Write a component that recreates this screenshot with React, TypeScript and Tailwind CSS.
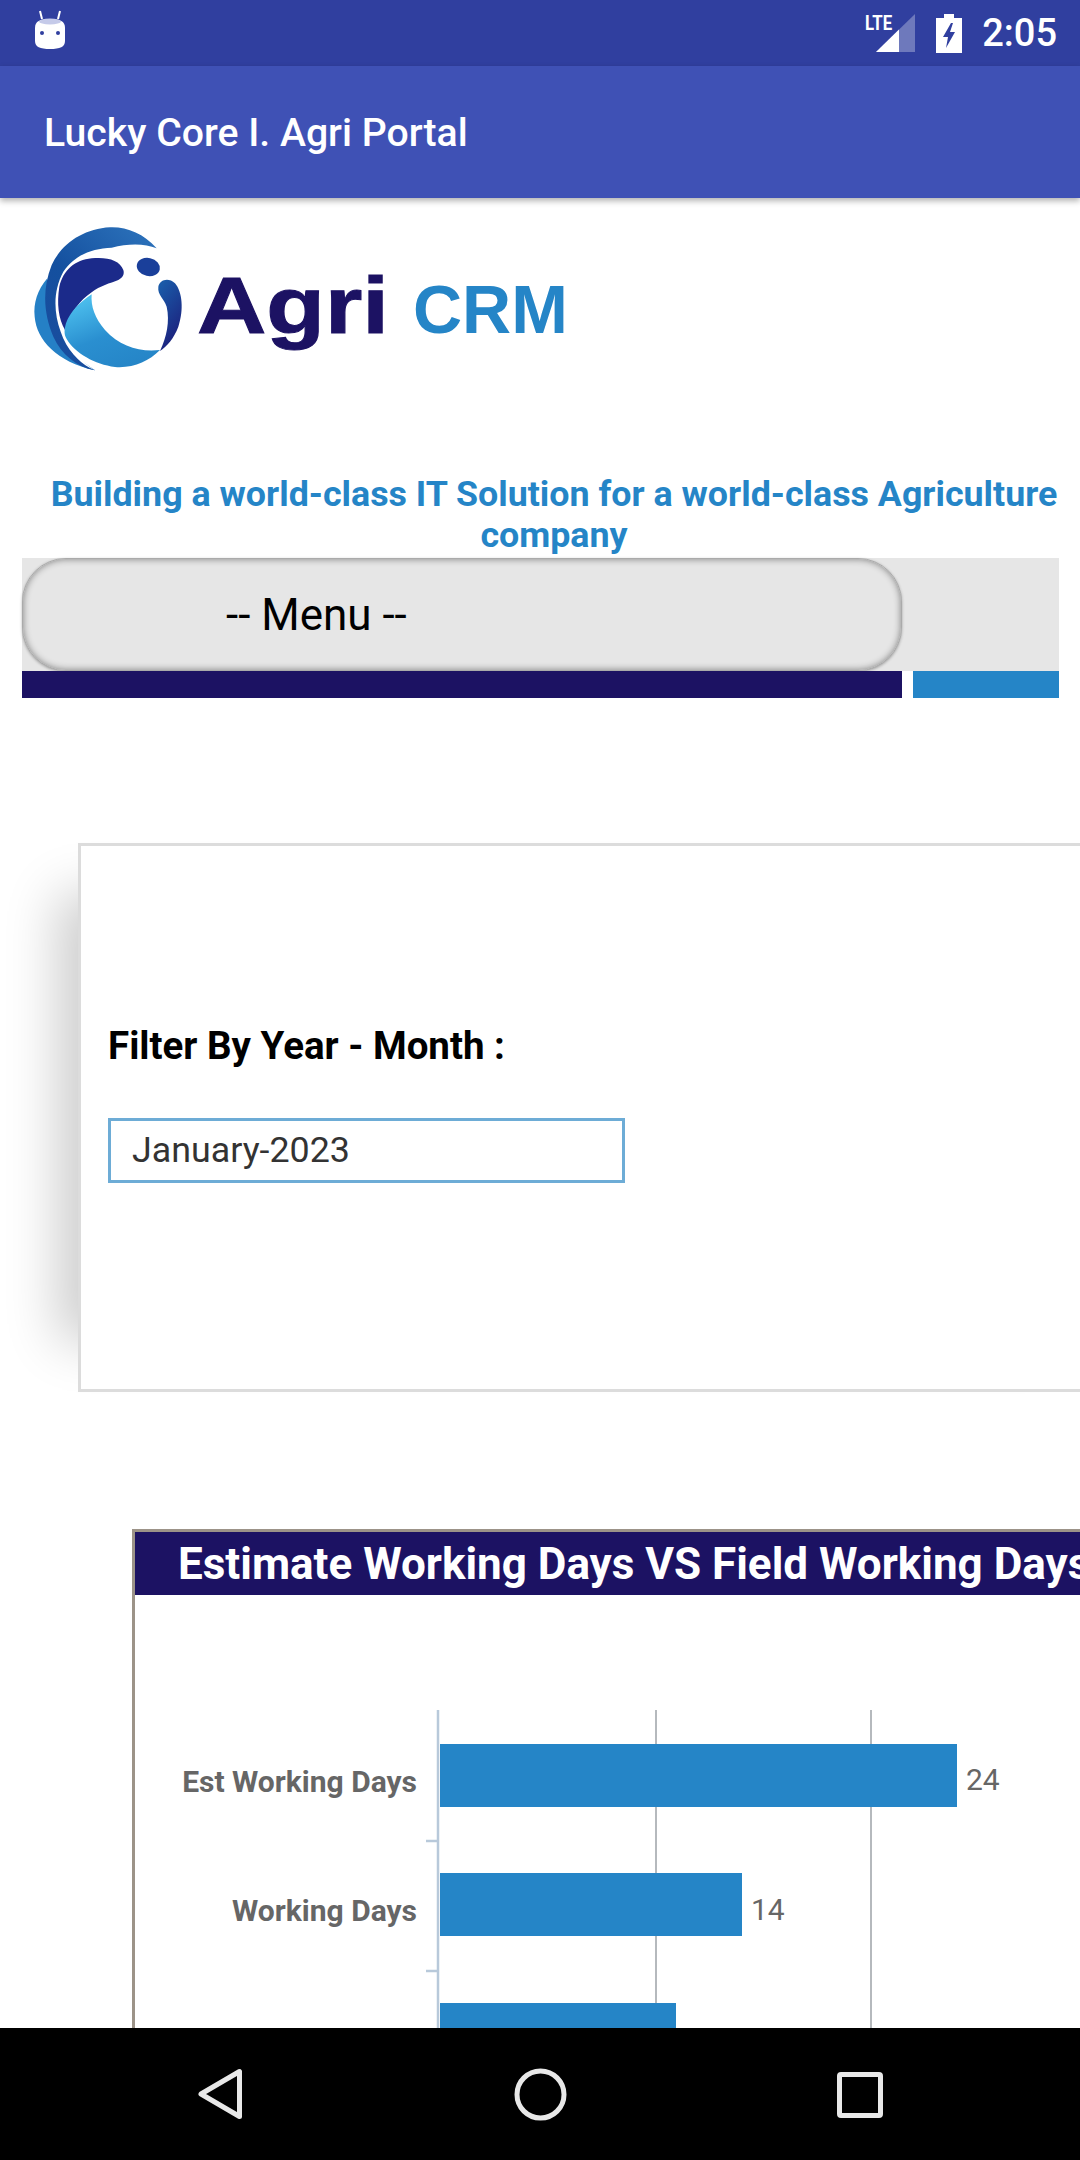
import React from "react";

const roboto = "font-['Roboto',sans-serif]";

function Logo() {
  return (
    <svg width="180" height="160" viewBox="0 0 540 480" className="shrink-0">
      <defs>
        <linearGradient id="lc" x1="0.2" y1="0" x2="0.7" y2="1">
          <stop offset="0" stopColor="#4fc3f0" />
          <stop offset="0.55" stopColor="#2a8fd0" />
          <stop offset="1" stopColor="#2585c7" />
        </linearGradient>
        <linearGradient id="top" x1="0.8" y1="0" x2="0.1" y2="1">
          <stop offset="0" stopColor="#2a6fb8" />
          <stop offset="0.5" stopColor="#14509f" />
          <stop offset="1" stopColor="#1a4c9e" />
        </linearGradient>
        <linearGradient id="arc" x1="0.3" y1="0" x2="0.7" y2="1">
          <stop offset="0" stopColor="#1a5aa8" />
          <stop offset="1" stopColor="#1c1a78" />
        </linearGradient>
      </defs>
      <path d="M82 190C52 225 40 265 44 305C50 375 110 440 225 466L130 400C95 340 75 270 82 190Z" fill="#2580c6" />
      <path d="M410 100C370 55 320 35 270 37C190 42 125 85 95 150C65 225 72 300 100 365C125 420 170 455 225 466C175 440 140 405 122 350C100 290 100 225 130 170C165 120 215 100 275 98C325 85 375 85 410 100Z" fill="url(#top)" />
      <path d="M310 165C300 135 260 125 215 130C165 135 130 165 118 215C110 265 115 310 135 345C150 295 180 255 215 232C240 212 270 205 295 195C308 188 314 178 310 165Z" fill="#1b2a8a" />
      <path d="M215 238C180 262 150 290 138 325C132 345 132 360 140 372C165 415 225 448 285 456C340 460 385 440 420 405C360 412 300 395 255 345C225 310 212 275 215 238Z" fill="url(#lc)" />
      <path d="M140 375C150 415 185 450 225 466C190 445 160 410 140 375Z" fill="#ffffff" />
      <ellipse cx="385" cy="156" rx="35" ry="27" fill="#1a3f9a" transform="rotate(12 385 156)" />
      <path d="M415 215C418 195 445 185 465 205C487 230 492 285 475 335C462 370 440 395 420 408C440 365 450 320 440 275C432 250 412 240 415 215Z" fill="url(#arc)" />
    </svg>
  );
}

function CatIcon() {
  return (
    <svg width="40" height="44" viewBox="0 0 40 44" className="-mt-[6px]">
      <path d="M10 3l2 8M30 3l-2 8" stroke="#ffffff" strokeWidth="2" />
      <path d="M5 20C5 13 10 11 20 11S35 13 35 20V33C35 39 30 41 20 41S5 39 5 33Z" fill="#ffffff" />
      <ellipse cx="20" cy="13.5" rx="11" ry="3" fill="#c5cae9" />
      <circle cx="12" cy="25" r="2" fill="#303f9f" />
      <circle cx="28" cy="25" r="2" fill="#303f9f" />
    </svg>
  );
}

function StatusRight() {
  return (
    <div className="flex items-center">
      <div className="relative w-[50px] h-[40px]">
        <svg width="40" height="39" viewBox="0 0 40 39" className="absolute right-0 top-0">
          <path d="M1 39L40 1V39Z" fill="#ffffff" fillOpacity="0.3" />
          <path d="M1 39L24 16.5V39Z" fill="#ffffff" />
        </svg>
        <span className={`absolute left-0 top-[0px] text-[21px] leading-[20px] font-bold text-white ${roboto} scale-x-[0.8] origin-left`}>
          LTE
        </span>
      </div>
      <svg width="26" height="39" viewBox="0 0 26 39" className="ml-[21px]">
        <path
          fillRule="evenodd"
          d="M8 0H18V4H26V39H0V4H8ZM15 9L7 23H12L10 34L19 18H14L17 9Z"
          fill="#ffffff"
        />
      </svg>
      <span className={`ml-[20px] text-[38px] leading-[40px] text-white font-medium ${roboto}`}>2:05</span>
    </div>
  );
}

function Chart() {
  const grid = "#b5b9bd";
  const axis = "#b8c9da";
  const font = { fontFamily: "Roboto, sans-serif" };
  return (
    <svg width="945" height="445" viewBox="135 1595 945 445" className="block">
      <path d={`M656 1710V2040M871 1710V2040`} stroke={grid} strokeWidth="2" fill="none" />
      <path d={`M438 1710V2040M426 1841H438M426 1971H438`} stroke={axis} strokeWidth="2.5" fill="none" />
      <rect x="440" y="1744" width="517" height="63" fill="#2585c7" />
      <rect x="440" y="1873" width="302" height="63" fill="#2585c7" />
      <rect x="440" y="2003" width="236" height="63" fill="#2585c7" />
      <g style={font} fill="#666666" fontSize="30" fontWeight="700" textAnchor="end">
        <text x="417" y="1792">Est Working Days</text>
        <text x="417" y="1921">Working Days</text>
      </g>
      <g style={font} fill="#666666" fontSize="30">
        <text x="966" y="1790">24</text>
        <text x="751" y="1920">14</text>
      </g>
    </svg>
  );
}

export default function App() {
  return (
    <div className={`w-[1080px] h-[2160px] flex flex-col overflow-hidden bg-white ${roboto}`}>
      <div className="h-[66px] shrink-0 bg-[#303f9f] flex items-center justify-between pl-[30px] pr-[23px]">
        <CatIcon />
        <StatusRight />
      </div>
      <div className="h-[132px] shrink-0 bg-[#3f51b5] flex items-center pl-[44px] pt-[2px] relative z-10 shadow-[0_3px_6px_rgba(0,0,0,0.3)]">
        <span className="text-[39.2px] font-medium text-white">Lucky Core I. Agri Portal</span>
      </div>

      <main className="flex-1 overflow-hidden">
        <div className="flex items-start pl-[20px] pt-[17px] h-[276px]">
          <Logo />
          <div className="flex items-baseline -ml-[3px] mt-[45px] font-['Liberation_Sans',sans-serif] font-bold">
            <span className="inline-block origin-left scale-x-[1.2] [-webkit-text-stroke:1px_#1c1263] text-[80px] leading-[92px] text-[#1c1263]">Agri</span>
            <span className="text-[68px] leading-[92px] text-[#2585c7] ml-[56px]">CRM</span>
          </div>
        </div>

        <p className="w-[1064px] ml-[22px] text-center text-[35.8px] leading-[41px] font-bold text-[#2585c7]">
          Building a world-class IT Solution for a world-class Agriculture company
        </p>

        <div className="ml-[22px] w-[1037px] h-[113px] mt-[2px] bg-[#e6e6e6]">
          <div className={`w-[880px] h-[113px] rounded-[44px] bg-[#e6e6e6] border border-[#aaaaaa] shadow-[inset_0_0_7px_rgba(0,0,0,0.45),0_1px_3px_rgba(0,0,0,0.3)] flex items-center pl-[203px] ${roboto} text-[44px] text-black`}>
            -- Menu --
          </div>
        </div>
        <div className="ml-[22px] w-[1037px] h-[27px] flex gap-[11px]">
          <div className="w-[880px] bg-[#1c1263]" />
          <div className="flex-1 bg-[#2585c7]" />
        </div>

        <div className="ml-[78px] w-[1100px] h-[549px] mt-[145px] border-[3px] border-[#dcdcdc] bg-white shadow-[-70px_0_50px_-50px_rgba(0,0,0,0.2)] pl-[27px] pt-[178px]">
          <div className="text-[38.5px] leading-[44px] font-bold text-black">Filter By Year - Month :</div>
          <div className="mt-[50px] w-[517px] h-[65px] border-[3px] border-[#6dacd6] flex items-center pl-[21px] text-[35.8px] text-[#333333]">
            January-2023
          </div>
        </div>

        <div className="ml-[132px] w-[1100px] mt-[137px] border-t-[3px] border-l-[3px] border-[#9c9388]">
          <div className="h-[63px] bg-[#1c1263] pl-[43px] flex items-center text-[44px] font-bold text-white whitespace-nowrap">
            Estimate Working Days VS Field Working Days
          </div>
          <Chart />
        </div>
      </main>

      <div className="h-[132px] shrink-0 bg-black flex items-start">
        <svg width="1080" height="132" viewBox="0 2028 1080 132" className="block">
          <path d="M239.5 2071.5V2116.5L201 2094Z" fill="none" stroke="#e8e8e8" strokeWidth="5" strokeLinejoin="round" />
          <circle cx="540.5" cy="2094.5" r="23.5" fill="none" stroke="#e8e8e8" strokeWidth="5" />
          <rect x="839.5" y="2074.5" width="41" height="41" rx="1.5" fill="none" stroke="#e8e8e8" strokeWidth="5" />
        </svg>
      </div>
    </div>
  );
}
